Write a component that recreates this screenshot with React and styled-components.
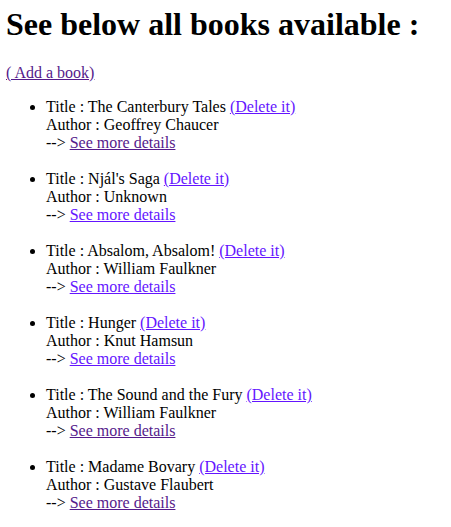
import React from "react";
import styled, { createGlobalStyle } from "styled-components";

const GlobalStyle = createGlobalStyle`
  body {
    margin: 0 6px;
    font-family: "Liberation Serif", "Times New Roman", serif;
    font-size: 16px;
    color: #000;
    background: #fff;
  }
`;

const Page = styled.main`
  display: block;
  padding-top: 0;
`;

const Heading = styled.h1`
  font-size: 32px;
  font-weight: bold;
  margin: 5.5px 0 21.44px;
`;

const Para = styled.p`
  margin: 16px 0;
`;

const Link = styled.a`
  color: ${(p) => (p.$visited ? "#551a8b" : "#6415ff")};
  text-decoration: underline;
  cursor: pointer;
`;

const BookList = styled.ul`
  margin: 16px 0;
  padding-left: 40px;
  list-style: disc;
`;

const BookItem = styled.li`
  line-height: normal;
`;

const books = [
  { title: "The Canterbury Tales", author: "Geoffrey Chaucer", visited: true },
  { title: "Njál's Saga", author: "Unknown", visited: false },
  { title: "Absalom, Absalom!", author: "William Faulkner", visited: false },
  { title: "Hunger", author: "Knut Hamsun", visited: false },
  { title: "The Sound and the Fury", author: "William Faulkner", visited: true },
  { title: "Madame Bovary", author: "Gustave Flaubert", visited: true },
];

export default function App() {
  return (
    <Page>
      <GlobalStyle />
      <Heading>See below all books available :</Heading>
      <Para>
        <Link $visited href="#add">( Add a book)</Link>
      </Para>
      <BookList>
        {books.map((b) => (
          <BookItem key={b.title}>
            Title : {b.title} <Link href="#delete">(Delete it)</Link>
            <br />
            Author : {b.author}
            <br />
            --&gt; <Link $visited={b.visited} href="#details">See more details</Link>
            <br />
            <br />
          </BookItem>
        ))}
      </BookList>
    </Page>
  );
}
